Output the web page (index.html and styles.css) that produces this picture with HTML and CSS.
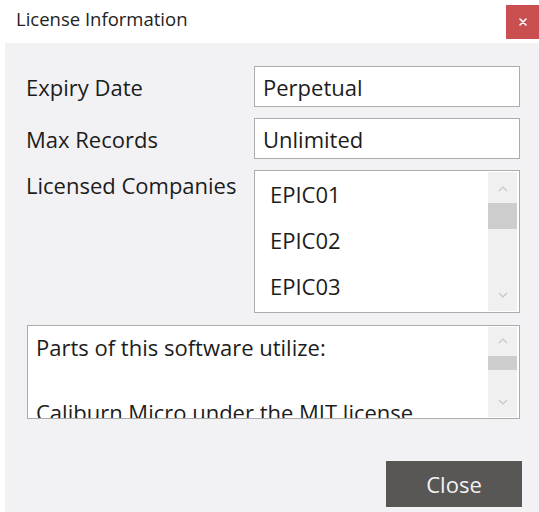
FILE: index.html
```html
<!DOCTYPE html>
<html>
<head>
<meta charset="utf-8">
<link rel="stylesheet" href="styles.css">
</head>
<body>
<div class="window">
  <div class="titlebar">
    <span class="title">License Information</span>
    <div class="close-x">
      <svg width="10" height="10" viewBox="0 0 10 10"><path d="M2 2 L8 8 M8 2 L2 8" stroke="#fff" stroke-width="1.6" stroke-linecap="round"/></svg>
    </div>
  </div>
  <div class="panel">
    <div class="form">
      <div class="label">Expiry Date</div>
      <div class="field">Perpetual</div>
      <div class="label">Max Records</div>
      <div class="field">Unlimited</div>
      <div class="label top">Licensed Companies</div>
      <div class="list">
        <div class="list-items">
          <div class="item">EPIC01</div>
          <div class="item">EPIC02</div>
          <div class="item">EPIC03</div>
        </div>
        <div class="scrollbar list-bar">
          <svg class="arrow up" width="12" height="8" viewBox="0 0 12 8"><path d="M2 6 L6 2 L10 6" fill="none" stroke="#c6c6c6" stroke-width="1.2"/></svg>
          <div class="thumb"></div>
          <div class="spacer"></div>
          <svg class="arrow down" width="12" height="8" viewBox="0 0 12 8"><path d="M2 2 L6 6 L10 2" fill="none" stroke="#c6c6c6" stroke-width="1.2"/></svg>
        </div>
      </div>
    </div>
    <div class="notes">
      <div class="notes-text">
        <p>Parts of this software utilize:</p>
        <p>Caliburn Micro under the MIT license</p>
      </div>
      <div class="scrollbar notes-bar">
        <svg class="arrow up" width="12" height="8" viewBox="0 0 12 8"><path d="M2 6 L6 2 L10 6" fill="none" stroke="#c6c6c6" stroke-width="1.2"/></svg>
        <div class="thumb"></div>
        <div class="spacer"></div>
        <svg class="arrow down" width="12" height="8" viewBox="0 0 12 8"><path d="M2 2 L6 6 L10 2" fill="none" stroke="#c6c6c6" stroke-width="1.2"/></svg>
      </div>
    </div>
    <div class="actions">
      <button class="btn-close">Close</button>
    </div>
  </div>
</div>
</body>
</html>
```

FILE: styles.css
```css
* { box-sizing: border-box; }
html, body {
  margin: 0;
  padding: 0;
  background: #ffffff;
  font-family: "Open Sans", "Noto Sans", sans-serif;
  color: #1c1c1c;
}
.window {
  width: 539px;
  height: 512px;
  display: flex;
  flex-direction: column;
  overflow: hidden;
}
.titlebar {
  height: 43px;
  display: flex;
  align-items: flex-start;
  justify-content: space-between;
  background: #ffffff;
}
.title {
  font-size: 18.5px;
  margin: 6px 0 0 16px;
  color: #222;
}
.close-x {
  width: 33px;
  height: 34px;
  margin-top: 5px;
  background: #c94f51;
  display: flex;
  align-items: center;
  justify-content: center;
}
.panel {
  flex: 1;
  margin-left: 5px;
  background: #f2f2f5;
  padding: 23px 18px 0 21px;
  display: flex;
  flex-direction: column;
}
.form {
  display: grid;
  grid-template-columns: 228px 266px;
  grid-template-rows: 41px 41px 143px;
  row-gap: 11px;
}
.label {
  font-size: 22px;
  align-self: center;
  line-height: 30px;
}
.label.top { align-self: start; }
.field {
  background: #fff;
  border: 1px solid #acacac;
  font-size: 22px;
  display: flex;
  align-items: center;
  padding-left: 8px;
}
.list {
  background: #fff;
  border: 1px solid #acacac;
  display: flex;
}
.list-items {
  flex: 1;
  padding-left: 15px;
}
.item {
  height: 46px;
  font-size: 22px;
  display: flex;
  align-items: center;
}
.scrollbar {
  width: 29px;
  margin: 1px 2px 1px 0;
  background: #f0f0f0;
  display: flex;
  flex-direction: column;
  align-items: center;
}
.arrow { flex: none; }
.thumb {
  width: 100%;
  background: #cdcdcd;
  flex: none;
}
.spacer { flex: 1; }
.list-bar .up { margin-top: 13px; }
.list-bar .thumb { height: 26px; margin-top: 10px; }
.list-bar .down { margin-bottom: 12px; }
.notes-bar .up { margin-top: 10px; }
.notes-bar .thumb { height: 14px; margin-top: 11px; }
.notes-bar .down { margin-bottom: 11px; }
.notes {
  margin-top: 12px;
  margin-left: 1px;
  width: 493px;
  height: 94px;
  background: #fff;
  border: 1px solid #acacac;
  display: flex;
  overflow: hidden;
}
.notes-text {
  flex: 1;
  padding: 5px 0 0 8px;
  font-size: 22px;
  line-height: 32.5px;
  overflow: hidden;
}
.notes-text p {
  margin: 0 0 32.5px 0;
  white-space: nowrap;
}
.actions {
  display: flex;
  justify-content: flex-end;
  margin-top: 42px;
  padding-right: 0;
}
.btn-close {
  width: 136px;
  height: 46px;
  background: #595656;
  color: #f2f2f2;
  border: none;
  font-family: "Open Sans", "Noto Sans", sans-serif;
  font-size: 22px;
  padding: 0;
  margin-right: -1px;
}
```
